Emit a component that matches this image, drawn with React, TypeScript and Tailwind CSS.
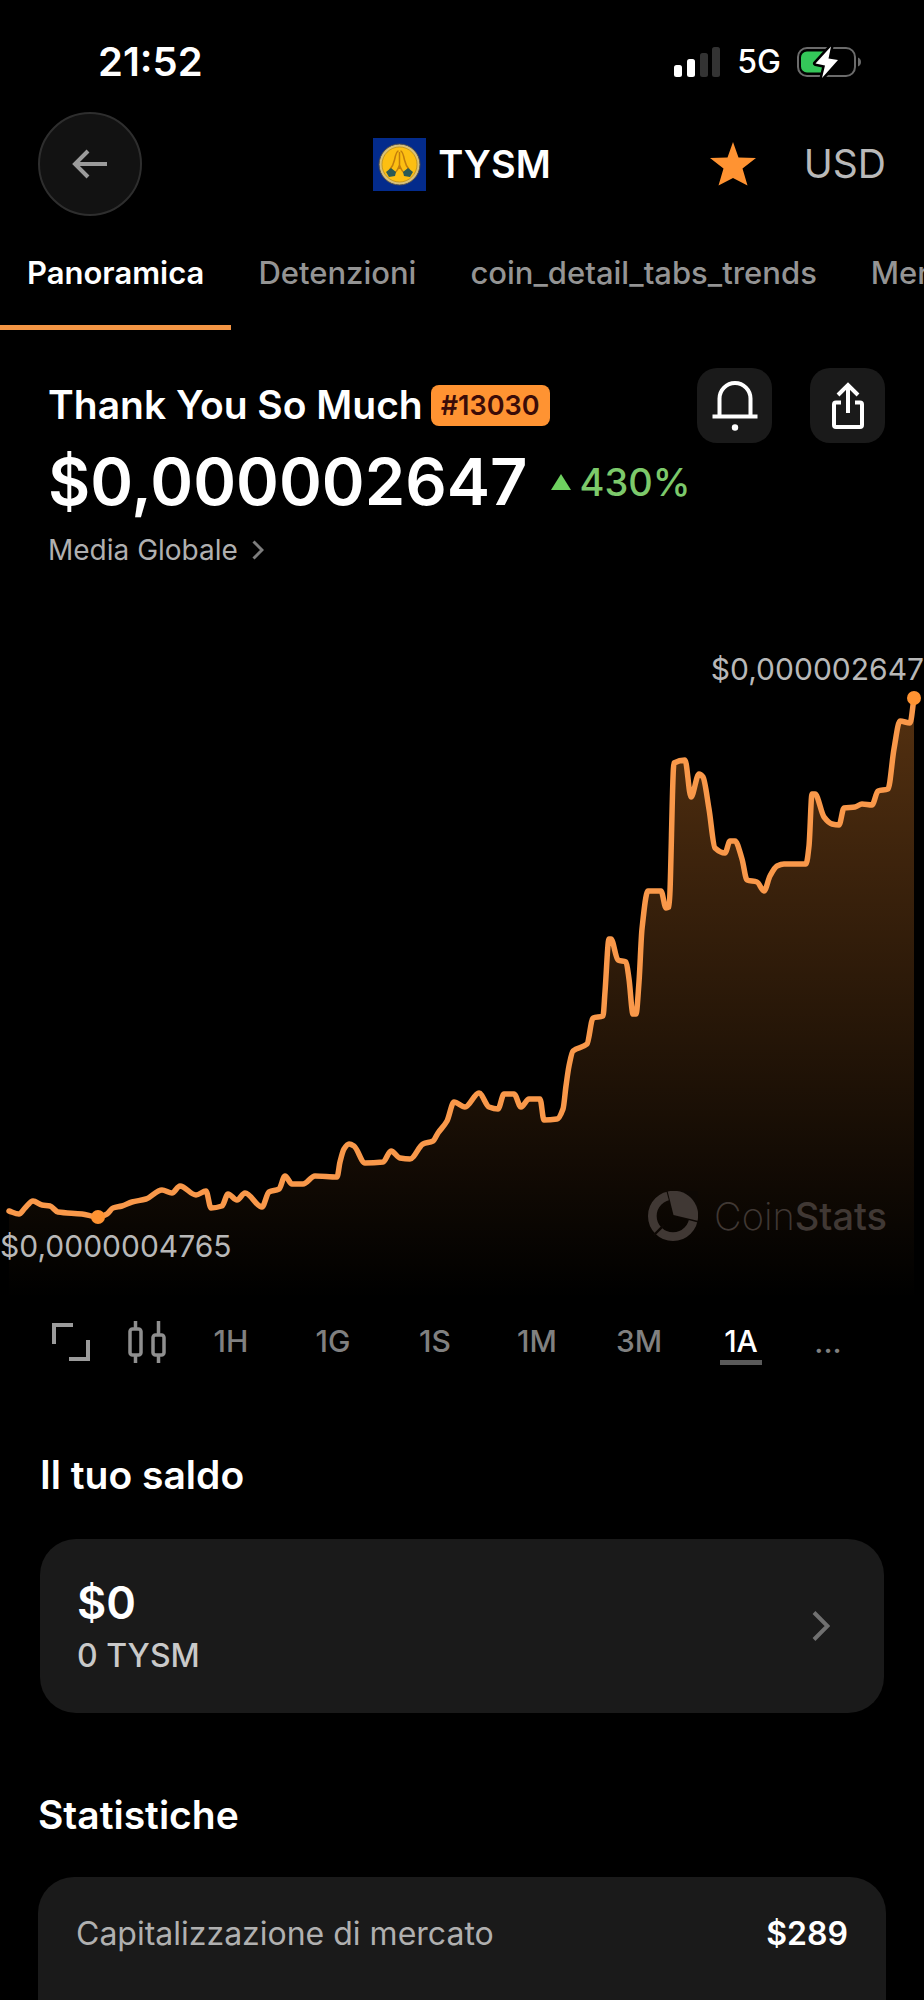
import clsx from "clsx";

type Point = [number, number];

const tabs = ["Panoramica", "Detenzioni", "coin_detail_tabs_trends", "Mercati"];
const ranges = ["1H", "1G", "1S", "1M", "3M", "1A"];
const stats = [{ label: "Capitalizzazione di mercato", value: "$289" }];

const points: Point[] = [
  [9, 1212], [19, 1215], [25, 1209], [33, 1202], [42, 1206], [50, 1207],
  [58, 1213], [82, 1215], [98, 1218], [107, 1215], [113, 1209], [122, 1207],
  [132, 1203], [146, 1200], [162, 1191], [172, 1194], [180, 1187], [196, 1196],
  [206, 1192], [211, 1209], [222, 1207], [228, 1195], [237, 1201], [245, 1194],
  [262, 1208], [269, 1193], [279, 1190], [285, 1177], [292, 1185], [303, 1185],
  [315, 1177], [337, 1178], [340, 1163], [344, 1150], [349, 1145], [354, 1147],
  [365, 1164], [383, 1163], [391, 1152], [400, 1159], [410, 1160], [423, 1145],
  [433, 1142], [438, 1134], [447, 1122], [454, 1103], [465, 1108], [479, 1094],
  [489, 1108], [498, 1110], [504, 1095], [514, 1095], [521, 1108], [529, 1100],
  [540, 1100], [544, 1121], [557, 1120], [563, 1110], [566, 1087], [569, 1067],
  [573, 1052], [587, 1045], [593, 1019], [603, 1017], [605, 993], [609, 940],
  [611, 940], [618, 961], [626, 963], [629, 980], [633, 1015], [636, 1015],
  [639, 983], [642, 930], [648, 892], [661, 892], [666, 909], [669, 908],
  [674, 764], [685, 761], [691, 798], [699, 775], [703, 778], [709, 810],
  [715, 849], [725, 854], [730, 842], [735, 842], [742, 860], [747, 881],
  [757, 883], [764, 892], [770, 877], [777, 867], [784, 865], [806, 865],
  [809, 847], [812, 795], [815, 795], [824, 818], [832, 825], [839, 826],
  [844, 809], [855, 808], [862, 805], [872, 806], [878, 792], [888, 790],
  [894, 750], [900, 722], [910, 724], [914, 699],
];

// Monotone cubic interpolation, so the curve never overshoots a price
function curve(pts: Point[]) {
  const slopes = pts.slice(1).map((p, i) => (p[1] - pts[i][1]) / (p[0] - pts[i][0]));
  const tangents = pts.map((_, i) => {
    const a = slopes[i - 1];
    const b = slopes[i];
    if (a === undefined) return b;
    if (b === undefined) return a;
    return a * b <= 0 ? 0 : (2 * a * b) / (a + b);
  });
  let d = `M${pts[0][0]} ${pts[0][1]}`;
  for (let i = 1; i < pts.length; i++) {
    const [x0, y0] = pts[i - 1];
    const [x1, y1] = pts[i];
    const h = (x1 - x0) / 3;
    d += `C${x0 + h} ${y0 + tangents[i - 1] * h} ${x1 - h} ${y1 - tangents[i] * h} ${x1} ${y1}`;
  }
  return d;
}

function StatusBar() {
  return (
    <div className="flex h-28 items-center justify-between pt-3 pr-[62px] pl-[98px]">
      <span className="text-[40px] font-semibold">21:52</span>
      <div className="flex items-center gap-4">
        <svg width="47" height="30" viewBox="0 0 47 30">
          <rect x="0" y="18" width="8" height="12" rx="2.500" fill="#fff" />
          <rect x="13" y="12" width="8" height="18" rx="2.500" fill="#fff" />
          <rect x="26" y="6" width="8" height="24" rx="2.500" fill="#333" />
          <rect x="38" y="0" width="8" height="30" rx="2.500" fill="#333" />
        </svg>
        <span className="text-[32px] font-medium">5G</span>
        <svg width="65" height="34" viewBox="0 0 65 34">
          <rect x="1" y="3" width="57" height="28" rx="9" fill="none" stroke="#6b6b6b" strokeWidth="2" />
          <path d="M61 12.500c4 1.500 4 7.500 0 9Z" fill="#6b6b6b" />
          <path d="M10 6.500H27V27.500H10a6 6 0 0 1-6-6v-9a6 6 0 0 1 6-6Z" fill="#34c759" />
          <path
            d="M34 1.500 18.500 18.500 28 20.500 25 33 41 15 31.500 13.500Z"
            fill="#fff"
            stroke="#000"
            strokeWidth="5"
            strokeLinejoin="round"
            paintOrder="stroke"
          />
        </svg>
      </div>
    </div>
  );
}

function CoinLogo() {
  return (
    <svg width="53" height="53" viewBox="0 0 53 53">
      <rect width="53" height="53" fill="#032b8c" />
      <circle cx="26.500" cy="26.500" r="20.500" fill="#d8c078" stroke="#4b4a4d" strokeWidth="1" />
      <circle cx="26.500" cy="26.500" r="17.500" fill="#fdbf12" stroke="#c99a1c" strokeWidth="1" />
      <path
        d="M25.500 13c-2 0-3 4-4 9s-2.500 7-5 10M27.500 13c2 0 3 4 4 9s2.500 7 5 10M26.500 14v17M26.500 27c-1 3-2 6-5 8M26.500 27c1 3 2 6 5 8"
        fill="none"
        stroke="#c27d0c"
        strokeWidth="1.500"
      />
      <path d="M13 34l5-4 5 4-1 4-6 1Z" fill="#2b5a55" />
      <path d="M40 34l-5-4-5 4 1 4 6 1Z" fill="#2b5a55" />
    </svg>
  );
}

function TopBar() {
  return (
    <header className="grid grid-cols-[1fr_auto_1fr] items-center px-[38px]">
      <button
        aria-label="Indietro"
        className="flex size-[104px] items-center justify-center rounded-full border-2 border-[#2e2e2e] bg-[#121212]"
      >
        <svg width="36" height="30" viewBox="0 0 36 30" fill="none" stroke="#9b9b9b" strokeWidth="4">
          <path d="M35 15H3M16 2 3 15l13 13" />
        </svg>
      </button>
      <div className="flex items-center gap-3">
        <CoinLogo />
        <h1 className="text-[38px] font-semibold">TYSM</h1>
      </div>
      <div className="flex items-center justify-end gap-12">
        <button aria-label="Preferiti">
          <svg width="46" height="44" viewBox="0 0 46 44" fill="#ff9332">
            <path d="M23 0 28.500 15.500 46 16 32.500 26.500 37.500 43.500 23 36 8.500 43.500 13.500 26.500 0 16 17.500 15.500Z" />
          </svg>
        </button>
        <button className="text-[39px] text-[#b9b9b9]">USD</button>
      </div>
    </header>
  );
}

function Tabs() {
  return (
    <nav className="flex h-[114px] overflow-hidden">
      {tabs.map((tab, i) => (
        <a
          key={tab}
          href="#"
          className={clsx(
            "flex shrink-0 items-center border-b-[5px] px-[27px] pt-1.5 text-[31px] whitespace-nowrap",
            i === 0
              ? "border-[#f39544] font-semibold text-white"
              : "border-transparent font-medium text-[#949494]"
          )}
        >
          {tab}
        </a>
      ))}
    </nav>
  );
}

function CoinHeader() {
  return (
    <section className="pt-[38px] pr-[39px] pl-12">
      <div className="flex items-center justify-between">
        <div className="flex items-center gap-2">
          <h2 className="text-[39px] font-semibold">Thank You So Much</h2>
          <span className="rounded-lg bg-[#ff9332] px-2.5 text-[27px] leading-[41px] font-semibold text-[#3b0c08]">
            #13030
          </span>
        </div>
        <div className="flex gap-[38px]">
          <button
            aria-label="Avvisi"
            className="flex size-[75px] items-center justify-center rounded-[20px] bg-[#1a1a1a]"
          >
            <svg width="46" height="50" viewBox="0 0 46 50" fill="none" stroke="#fff" strokeWidth="4">
              <path d="M0.500 35.500h45M7.500 35V17.500a15.500 15.500 0 0 1 31 0V35" />
              <circle cx="23" cy="46.500" r="3.200" fill="#fff" stroke="none" />
            </svg>
          </button>
          <button
            aria-label="Condividi"
            className="flex size-[75px] items-center justify-center rounded-[20px] bg-[#1a1a1a]"
          >
            <svg width="34" height="48" viewBox="0 0 34 48" fill="none" stroke="#fff" strokeWidth="4">
              <path d="M10 20.500H5a2 2 0 0 0-2 2V43a2 2 0 0 0 2 2h24a2 2 0 0 0 2-2V22.500a2 2 0 0 0-2-2h-5" />
              <path d="M17 31V3M7 13 17 3l10 10" />
            </svg>
          </button>
        </div>
      </div>
      <div className="flex items-center gap-6">
        <span className="text-[65px] leading-[78px] font-semibold">$0,000002647</span>
        <span className="flex items-center gap-2 text-[38px] font-medium text-[#7cc96b]">
          <svg width="20" height="16" viewBox="0 0 20 16" fill="#6fd160">
            <path d="M10 0 20 16H0Z" />
          </svg>
          430%
        </span>
      </div>
      <a href="#" className="inline-flex items-center gap-3.5 text-[28px] leading-[58px] text-[#b0b0b0]">
        Media Globale
        <svg width="12" height="20" viewBox="0 0 12 20" fill="none" stroke="#7d7d7d" strokeWidth="3">
          <path d="M1.500 1.500 10 10l-8.500 8.500" />
        </svg>
      </a>
    </section>
  );
}

function Watermark() {
  return (
    <div className="absolute right-[4%] bottom-[11%] flex items-center gap-4 text-[#403834]">
      <svg width="50" height="50" viewBox="0 0 52 52">
        <circle cx="26" cy="26" r="21.500" fill="none" stroke="currentColor" strokeWidth="9" />
        <path d="M26 26 17 -8 60 -8 60 35Z" fill="#0d0804" />
        <path d="M26.500 25 20.500 0.500A25.500 25.500 0 0 1 51.500 31Z" fill="currentColor" />
        <path d="M17 35 6 46" stroke="#0d0804" strokeWidth="2.500" />
      </svg>
      <span className="text-[38px] font-extralight">
        Coin<span className="font-medium">Stats</span>
      </span>
    </div>
  );
}

function PriceChart() {
  const line = curve(points);
  return (
    <section className="mt-[70px] text-[30px] leading-10 text-[#b8b8b8]">
      <p className="text-right">$0,000002647</p>
      <div className="relative">
        <svg viewBox="0 690 924 620" className="block w-full">
          <defs>
            <linearGradient id="area" x1="0" y1="699" x2="0" y2="1300" gradientUnits="userSpaceOnUse">
              <stop offset="0" stopColor="#ff9332" stopOpacity="0.330" />
              <stop offset="1" stopColor="#ff9332" stopOpacity="0" />
            </linearGradient>
          </defs>
          <path d={`${line}V1300H9Z`} fill="url(#area)" />
          <path d={line} fill="none" stroke="#f9984a" strokeWidth="5.500" strokeLinecap="round" strokeLinejoin="round" />
          <circle cx="98" cy="1218" r="7" fill="#ff9332" />
          <circle cx="914" cy="699" r="7" fill="#ff9332" />
        </svg>
        <p className="absolute bottom-[7%] left-0">$0,0000004765</p>
        <Watermark />
      </div>
    </section>
  );
}

function RangePicker() {
  return (
    <div className="flex h-[66px] items-center pr-[60px] pl-[52px] text-[30px] font-medium text-[#808080]">
      <div className="flex w-32 shrink-0 gap-[38px]">
        <button aria-label="Schermo intero">
          <svg width="38" height="42" viewBox="0 0 38 42" fill="none" stroke="#9b9b9b" strokeWidth="4">
            <path d="M2 23V4H21M36 19V38H17" />
          </svg>
        </button>
        <button aria-label="Candele">
          <svg width="38" height="42" viewBox="0 0 38 42" fill="none" stroke="#8f8f8f" strokeWidth="3.500">
            <rect x="2" y="8" width="11" height="26" rx="2.500" />
            <path d="M7.500 0v8M7.500 34v8M30.500 0v14M30.500 34v8" />
            <rect x="25" y="14" width="11" height="20" rx="2.500" />
          </svg>
        </button>
      </div>
      {ranges.map((range) => (
        <div key={range} className="flex flex-1 justify-center">
          <button
            className={clsx(
              "border-y-[5px] border-t-transparent px-1 pb-0.5 leading-[34px]",
              range === "1A" ? "border-b-[#5a5a5a] text-white" : "border-b-transparent"
            )}
          >
            {range}
          </button>
        </div>
      ))}
      <button aria-label="Altro" className="w-[72px]">
        ...
      </button>
    </div>
  );
}

export default function App() {
  return (
    <div className="flex min-h-screen flex-col overflow-hidden bg-black font-['Inter',sans-serif] text-white">
      <StatusBar />
      <TopBar />
      <Tabs />
      <CoinHeader />
      <PriceChart />
      <RangePicker />

      <section className="mt-[76px] px-10">
        <h2 className="text-[39px] leading-12 font-semibold">Il tuo saldo</h2>
        <button className="mt-10 flex w-full items-center justify-between rounded-[36px] bg-[#1a1a1a] py-[34px] pr-[54px] pl-[37px] text-left">
          <span>
            <span className="block text-[45px] leading-[60px] font-semibold">$0</span>
            <span className="block text-[32px] leading-[46px] font-medium text-[#c9c9c9]">0 TYSM</span>
          </span>
          <svg width="18" height="30" viewBox="0 0 18 30" fill="none" stroke="#707070" strokeWidth="4">
            <path d="M2 1.500 15.500 15 2 28.500" />
          </svg>
        </button>
      </section>

      <section className="mt-[78px] flex grow flex-col px-[38px]">
        <h2 className="text-[39px] leading-12 font-semibold">Statistiche</h2>
        <dl className="mt-[38px] grow rounded-t-[36px] bg-[#1a1a1a] px-[38px] pt-[33px]">
          {stats.map((stat) => (
            <div key={stat.label} className="flex justify-between text-[32px] leading-12">
              <dt className="text-[#b0b0b0]">{stat.label}</dt>
              <dd className="font-semibold">{stat.value}</dd>
            </div>
          ))}
        </dl>
      </section>
    </div>
  );
}
